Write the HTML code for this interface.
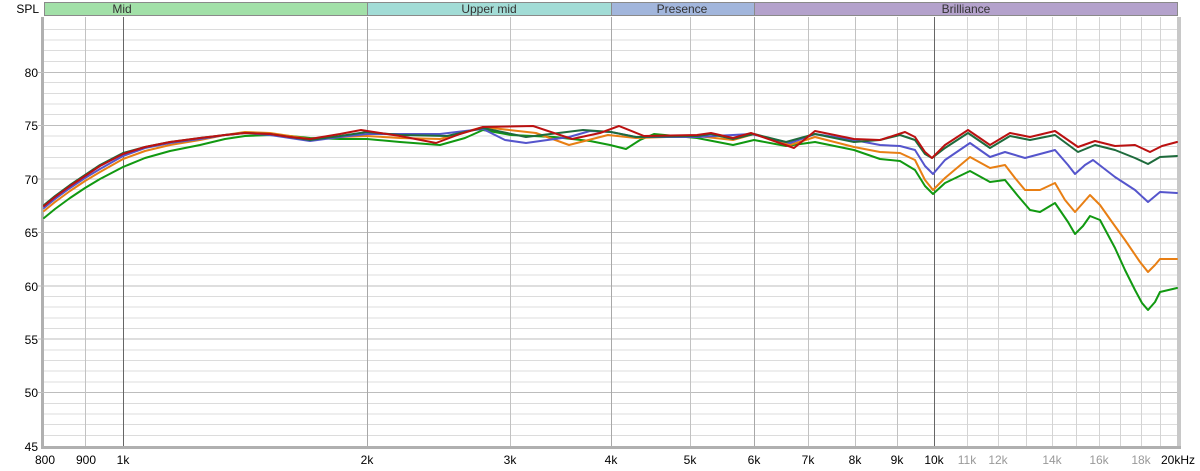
<!DOCTYPE html>
<html><head><meta charset="utf-8"><style>
html,body{margin:0;padding:0;background:#fff;width:1200px;height:471px;overflow:hidden}
svg text{font-family:"Liberation Sans","DejaVu Sans",sans-serif;font-size:12px;fill:#000}
</style></head><body>
<svg width="1200" height="471" xmlns="http://www.w3.org/2000/svg">
<rect x="44" y="2" width="323" height="14" fill="#a2e0a8"/>
<rect x="367" y="2" width="244" height="14" fill="#a2dcd6"/>
<rect x="611" y="2" width="143" height="14" fill="#a2b6dc"/>
<rect x="754" y="2" width="423" height="14" fill="#b4a2cc"/>
<g stroke="#8a8a8a" stroke-width="1" fill="none">
<rect x="44.5" y="2.5" width="1133" height="13"/>
<line x1="367.5" y1="2" x2="367.5" y2="16"/><line x1="611.5" y1="2" x2="611.5" y2="16"/><line x1="754.5" y1="2" x2="754.5" y2="16"/>
</g>
<g font-size="12" text-anchor="middle">
<text x="122" y="13" style="fill:#333">Mid</text>
<text x="489" y="13" style="fill:#333">Upper mid</text>
<text x="682" y="13" style="fill:#333">Presence</text>
<text x="966" y="13" style="fill:#333">Brilliance</text>
</g>
<rect x="41" y="17" width="3" height="431" fill="#b0b0b0"/>
<rect x="1177" y="17" width="4" height="431" fill="#c8c8c8"/>
<rect x="41" y="446" width="1140" height="3" fill="#b0b0b0"/>
<g stroke="#dcdcdc" stroke-width="1">
<line x1="44" x2="1177" y1="29.5" y2="29.5"/><line x1="44" x2="1177" y1="40" y2="40"/><line x1="44" x2="1177" y1="50.5" y2="50.5"/><line x1="44" x2="1177" y1="61.5" y2="61.5"/>
<line x1="44" x2="1177" y1="82.5" y2="82.5"/><line x1="44" x2="1177" y1="93.5" y2="93.5"/><line x1="44" x2="1177" y1="104" y2="104"/><line x1="44" x2="1177" y1="114.5" y2="114.5"/>
<line x1="44" x2="1177" y1="136" y2="136"/><line x1="44" x2="1177" y1="146.5" y2="146.5"/><line x1="44" x2="1177" y1="157.5" y2="157.5"/><line x1="44" x2="1177" y1="168" y2="168"/>
<line x1="44" x2="1177" y1="189.5" y2="189.5"/><line x1="44" x2="1177" y1="200" y2="200"/><line x1="44" x2="1177" y1="211" y2="211"/><line x1="44" x2="1177" y1="221.5" y2="221.5"/>
<line x1="44" x2="1177" y1="243" y2="243"/><line x1="44" x2="1177" y1="253.5" y2="253.5"/><line x1="44" x2="1177" y1="264.5" y2="264.5"/><line x1="44" x2="1177" y1="275" y2="275"/>
<line x1="44" x2="1177" y1="296.5" y2="296.5"/><line x1="44" x2="1177" y1="307" y2="307"/><line x1="44" x2="1177" y1="318" y2="318"/><line x1="44" x2="1177" y1="328.5" y2="328.5"/>
<line x1="44" x2="1177" y1="350" y2="350"/><line x1="44" x2="1177" y1="360.5" y2="360.5"/><line x1="44" x2="1177" y1="371" y2="371"/><line x1="44" x2="1177" y1="382" y2="382"/>
<line x1="44" x2="1177" y1="403.5" y2="403.5"/><line x1="44" x2="1177" y1="414" y2="414"/><line x1="44" x2="1177" y1="424.5" y2="424.5"/><line x1="44" x2="1177" y1="435.5" y2="435.5"/>
</g>
<g stroke="#bdbdbd" stroke-width="1">
<line x1="38" x2="1177" y1="72.5" y2="72.5"/><line x1="38" x2="1177" y1="125.5" y2="125.5"/><line x1="38" x2="1177" y1="179" y2="179"/><line x1="38" x2="1177" y1="232.5" y2="232.5"/>
<line x1="38" x2="1177" y1="286" y2="286"/><line x1="38" x2="1177" y1="339" y2="339"/><line x1="38" x2="1177" y1="392.5" y2="392.5"/>
</g>
<g stroke="#d4d4d4" stroke-width="1">
<line x1="967.5" x2="967.5" y1="17" y2="446"/><line x1="998.5" x2="998.5" y1="17" y2="446"/><line x1="1026.5" x2="1026.5" y1="17" y2="446"/><line x1="1052.5" x2="1052.5" y1="17" y2="446"/><line x1="1076.5" x2="1076.5" y1="17" y2="446"/><line x1="1099.5" x2="1099.5" y1="17" y2="446"/><line x1="1120.5" x2="1120.5" y1="17" y2="446"/><line x1="1141.5" x2="1141.5" y1="17" y2="446"/><line x1="1160.5" x2="1160.5" y1="17" y2="446"/>
</g>
<g stroke="#c2c2c2" stroke-width="1">
<line x1="85.5" x2="85.5" y1="17" y2="446"/><line x1="510.5" x2="510.5" y1="17" y2="446"/><line x1="690.5" x2="690.5" y1="17" y2="446"/><line x1="808.5" x2="808.5" y1="17" y2="446"/><line x1="855.5" x2="855.5" y1="17" y2="446"/><line x1="897.5" x2="897.5" y1="17" y2="446"/>
</g>
<g stroke="#a8a8a8" stroke-width="1">
<line x1="367.5" x2="367.5" y1="17" y2="446"/><line x1="611.5" x2="611.5" y1="17" y2="446"/><line x1="754.5" x2="754.5" y1="17" y2="446"/>
</g>
<g stroke="#666" stroke-width="1">
<line x1="123.5" x2="123.5" y1="17" y2="446"/><line x1="934.5" x2="934.5" y1="17" y2="446"/>
</g>
<g fill="none" stroke-width="2" stroke-linejoin="round" stroke-linecap="round">
<polyline stroke="#119911" points="44,218 55,209 70,198 85,188 100,179 123,167 145,158 170,151 200,145 225,139 245,136 270,135 290,136 310,138 340,139 367,139 400,142 440,145 465,138 483,130 511,135 554,137 590,141 610,145 626,149 640,140 654,134 697,138 733,145 754,140 786,146 815,142 854,150 880,159 900,161 915,170 925,186 933,194 945,183 970,171 990,182 1005,180 1018,196 1030,210 1040,212 1055,203 1068,222 1075,234 1083,226 1090,216 1100,220 1115,248 1125,270 1135,290 1142,303 1148,310 1155,302 1160,292 1177,288"/>
<polyline stroke="#e87f14" points="44,211 55,202 70,191 85,181 100,172 123,159 145,151 170,145 200,140 225,135 245,132 270,133 290,136 310,139 340,137 367,136 400,138 440,139 465,132 483,127 536,133 569,145 608,135 636,138 697,136 733,140 754,134 790,145 815,137 854,147 880,152 900,153 915,160 925,180 933,190 945,178 970,157 990,168 1005,165 1015,178 1025,190 1040,190 1055,183 1065,200 1075,212 1083,203 1090,195 1100,205 1112,222 1125,240 1140,262 1148,272 1155,265 1160,259 1177,259"/>
<polyline stroke="#5555cc" points="44,208 55,199 70,188 85,178 100,169 123,156 145,148 170,143 200,139 225,135 245,133 270,135 290,138 310,141 340,137 367,134 400,134 440,134 465,131 483,129 505,140 526,143 569,137 590,131 611,132 636,137 697,137 751,134 790,143 815,134 854,140 880,145 900,146 915,150 925,166 933,174 945,160 970,143 990,157 1005,152 1025,158 1055,150 1068,165 1075,174 1085,165 1093,160 1115,177 1135,190 1148,202 1160,192 1177,193"/>
<polyline stroke="#1e6b3c" points="44,205 55,196 70,185 85,175 100,165 123,153 145,147 170,142 200,138 225,135 245,133 270,134 290,137 310,140 340,136 367,132 400,135 447,136 483,128 526,137 583,130 611,132 636,137 697,136 711,134 733,139 754,134 786,142 815,134 854,142 880,140 900,135 915,140 925,154 932,158 945,148 968,133 990,148 1010,136 1030,140 1055,135 1078,152 1095,145 1115,150 1135,158 1148,164 1160,157 1177,156"/>
<polyline stroke="#bb1111" points="44,206 55,197 70,186 85,176 100,166 123,154 145,147 170,142 200,138 225,135 245,133 270,134 290,137 310,139 340,134 361,130 400,136 436,143 460,134 483,127 533,126 572,139 600,133 619,126 644,136 697,135 711,133 733,138 751,133 794,148 815,131 854,139 880,140 905,132 915,137 925,152 932,158 945,145 968,130 990,145 1010,133 1030,137 1055,131 1078,147 1095,141 1115,146 1135,145 1150,152 1162,146 1177,142"/>
</g>
<g text-anchor="end">
<text x="39" y="13">SPL</text>
<text x="38" y="77">80</text><text x="38" y="130">75</text><text x="38" y="184">70</text><text x="38" y="237">65</text>
<text x="38" y="291">60</text><text x="38" y="344">55</text><text x="38" y="397">50</text><text x="38" y="451">45</text>
</g>
<g text-anchor="middle">
<text x="45" y="464">800</text><text x="86" y="464">900</text><text x="123" y="464">1k</text><text x="367" y="464">2k</text>
<text x="510" y="464">3k</text><text x="611" y="464">4k</text><text x="690" y="464">5k</text><text x="754" y="464">6k</text>
<text x="808" y="464">7k</text><text x="855" y="464">8k</text><text x="897" y="464">9k</text><text x="934" y="464">10k</text>
<text x="967" y="464" style="fill:#999">11k</text><text x="998" y="464" style="fill:#999">12k</text><text x="1052" y="464" style="fill:#999">14k</text>
<text x="1099" y="464" style="fill:#999">16k</text><text x="1141" y="464" style="fill:#999">18k</text><text x="1178" y="464">20kHz</text>
</g>
</svg>
</body></html>
